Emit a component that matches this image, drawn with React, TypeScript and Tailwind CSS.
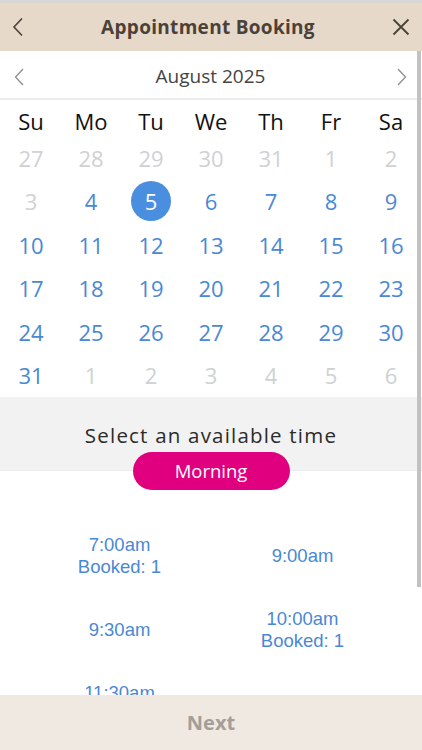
import React, { useState } from "react";

const weekdays = ["Su", "Mo", "Tu", "We", "Th", "Fr", "Sa"];

interface Day {
  n: number;
  muted?: boolean;
}

const buildDays = (): Day[] => {
  const days: Day[] = [];
  [27, 28, 29, 30, 31].forEach((n) => days.push({ n, muted: true }));
  for (let n = 1; n <= 31; n++) {
    days.push({ n, muted: n < 4 });
  }
  [1, 2, 3, 4, 5, 6].forEach((n) => days.push({ n, muted: true }));
  return days;
};

interface Slot {
  time: string;
  booked?: number;
}

const slots: Slot[] = [
  { time: "7:00am", booked: 1 },
  { time: "9:00am" },
  { time: "9:30am" },
  { time: "10:00am", booked: 1 },
  { time: "11:30am", booked: 1 },
];

const App = () => {
  const [selected, setSelected] = useState(5);
  const days = buildDays();

  return (
    <div className="relative w-[422px] h-[750px] flex flex-col overflow-hidden bg-white font-['Open_Sans',sans-serif]">
      <div className="h-[3px] bg-[#d9d7d5] flex-none" />

      {/* header */}
      <div className="h-[48px] flex-none flex items-center justify-between px-[12px] bg-[#e6d9c9]">
        <svg width="12" height="20" viewBox="0 0 12 20" fill="none" stroke="#4a4139" strokeWidth="1.6">
          <path d="M10 1.5 L2 10 L10 18.5" />
        </svg>
        <div className="text-[19px] font-bold text-[#4b4139] tracking-[0.3px]">Appointment Booking</div>
        <svg width="18" height="18" viewBox="0 0 18 18" fill="none" stroke="#4a4139" strokeWidth="1.8">
          <path d="M1.5 1.5 L16.5 16.5 M16.5 1.5 L1.5 16.5" />
        </svg>
      </div>

      <div className="flex-1 flex flex-col overflow-hidden">
        {/* month */}
        <div className="h-[49px] flex-none flex items-center justify-between pl-[14px] pr-[15px] pt-[4px] border-b-2 border-[#ececec]">
          <svg width="10" height="18" viewBox="0 0 10 18" fill="none" stroke="#8f8f8f" strokeWidth="1.3">
            <path d="M9 1 L1.5 9 L9 17" />
          </svg>
          <div className="text-[19px] text-[#444444]">August 2025</div>
          <svg width="10" height="18" viewBox="0 0 10 18" fill="none" stroke="#8f8f8f" strokeWidth="1.3">
            <path d="M1 1 L8.5 9 L1 17" />
          </svg>
        </div>

        {/* weekdays */}
        <div className="grid grid-cols-7 w-[420px] ml-[1px] h-[36px] pt-[7px] flex-none">
          {weekdays.map((d) => (
            <div key={d} className="text-center text-[22px] leading-[28px] text-[#111111]">
              {d}
            </div>
          ))}
        </div>

        {/* days */}
        <div className="grid grid-cols-7 w-[420px] ml-[1px] auto-rows-[43.5px] flex-none">
          {days.map((d, i) => (
            <div key={i} className="flex items-center justify-center">
              {!d.muted && d.n === selected ? (
                <div className="w-[40px] h-[40px] rounded-full bg-[#4a8ee0] text-white flex items-center justify-center text-[22px]">
                  {d.n}
                </div>
              ) : (
                <button
                  className={`text-[22px] leading-none ${d.muted ? "text-[#cfd1d3]" : "text-[#4a88d4]"}`}
                  onClick={() => !d.muted && setSelected(d.n)}
                >
                  {d.n}
                </button>
              )}
            </div>
          ))}
        </div>

        {/* time header */}
        <div className="h-[74px] flex-none bg-[#f2f2f2] border-b border-[#ececec] flex justify-center pt-[22px]">
          <div className="text-[20.5px] leading-[32px] tracking-[1.2px] text-[#2b2b2b]">Select an available time</div>
        </div>
        <div className="flex justify-center -mt-[19px] relative">
          <div className="w-[157px] h-[38px] rounded-full bg-[#e0007f] text-white text-[18.5px] flex items-center justify-center">
            Morning
          </div>
        </div>

        {/* slots */}
        <div className="grid grid-cols-2 w-[366px] ml-[28px] auto-rows-[74px] pt-[29px] font-['Liberation_Sans',Arial,sans-serif] text-[18.5px] leading-[22px] text-[#4a88d4]">
          {slots.map((s) => (
            <div key={s.time} className="flex flex-col items-center justify-center">
              <div>{s.time}</div>
              {s.booked ? <div>Booked: {s.booked}</div> : null}
            </div>
          ))}
        </div>
      </div>

      {/* footer */}
      <div className="h-[55px] flex-none bg-[#f0e9e2] flex items-center justify-center">
        <div className="text-[20px] font-bold text-[#a39e99]">Next</div>
      </div>

      {/* scrollbar */}
      <div className="absolute right-[1px] top-[51px] w-[4px] h-[536px] bg-[#c2c2c2]" />
    </div>
  );
};

export default App;
